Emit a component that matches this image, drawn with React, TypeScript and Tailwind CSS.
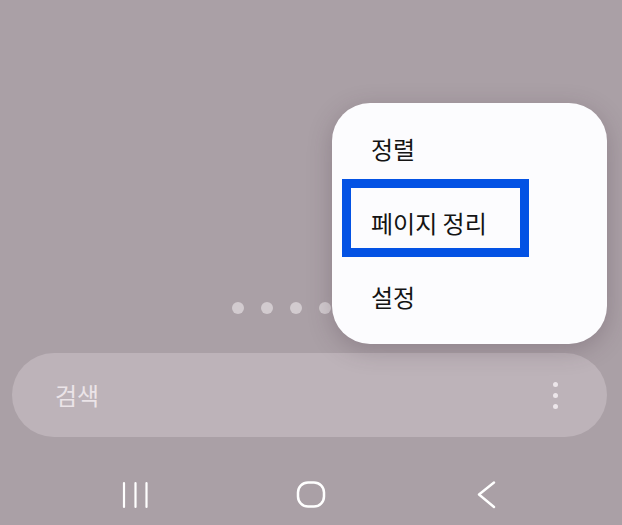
import React from "react";

const font = { fontFamily: '"Noto Sans CJK KR", "Noto Sans", sans-serif' };

function NavBar() {
  return (
    <div className="flex justify-center mt-[44px]">
      <div className="w-[176px] flex justify-center">
        <svg width="28" height="28" viewBox="0 0 28 28" fill="none" stroke="#ffffff" strokeWidth="2.2" strokeLinecap="round">
          <line x1="3" y1="2" x2="3" y2="26" />
          <line x1="14.5" y1="2" x2="14.5" y2="26" />
          <line x1="25.5" y1="2" x2="25.5" y2="26" />
        </svg>
      </div>
      <div className="w-[176px] flex justify-center">
        <svg width="30" height="28" viewBox="0 0 30 28" fill="none" stroke="#ffffff" strokeWidth="2.5">
          <rect x="2" y="1.5" width="26" height="24" rx="10" />
        </svg>
      </div>
      <div className="w-[176px] flex justify-center">
        <svg width="22" height="28" viewBox="0 0 22 28" fill="none" stroke="#ffffff" strokeWidth="2.4" strokeLinecap="round" strokeLinejoin="round">
          <polyline points="18,1.5 3,13.5 18,26" />
        </svg>
      </div>
    </div>
  );
}

function PopupMenu() {
  const items = ["정렬", "페이지 정리", "설정"];
  return (
    <div className="absolute left-[332px] top-[103px] w-[275px] h-[241px] rounded-[38px] bg-[#fcfcfe] shadow-[0_6px_24px_rgba(60,40,55,0.25)]">
      <div className="flex flex-col pt-[9px]">
        {items.map((item) => (
          <div key={item} className="h-[74px] flex items-center pl-[39px] text-[24px] text-[#141414]" style={font}>
            {item}
          </div>
        ))}
      </div>
      {/* highlight box */}
      <div className="absolute left-[10px] top-[76px] w-[187px] h-[78px] border-[9px] border-[#0352e4]" />
    </div>
  );
}

export default function App() {
  return (
    <div className="relative w-[622px] h-[525px] overflow-hidden bg-[#aaa0a6] flex flex-col">
      <div className="flex justify-center gap-[17px] pt-[302px] pr-[2px]">
        {[0, 1, 2, 3, 4, 5].map((i) => (
          <div key={i} className="w-[12px] h-[12px] rounded-full bg-[#d2cbcf]" />
        ))}
      </div>

      <div className="mt-[39px] ml-[12px] mr-[15px] h-[84px] rounded-full bg-[#bdb3b9] flex items-center justify-between pl-[43px] pr-[49px]">
        <span className="text-[24px] text-[#ebe4e8]" style={font}>
          검색
        </span>
        <div className="flex flex-col gap-[6px]">
          <div className="w-[5px] h-[5px] rounded-full bg-[#ece6ea]" />
          <div className="w-[5px] h-[5px] rounded-full bg-[#ece6ea]" />
          <div className="w-[5px] h-[5px] rounded-full bg-[#ece6ea]" />
        </div>
      </div>

      <NavBar />

      <PopupMenu />
    </div>
  );
}
